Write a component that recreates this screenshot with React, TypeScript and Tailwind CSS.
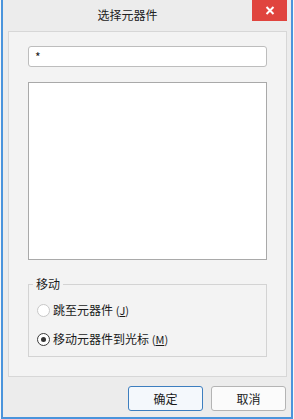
import React from 'react';

const font = { fontFamily: '"Noto Sans CJK SC", "Noto Sans", sans-serif' };

const Radio: React.FC<{ checked?: boolean; label: string; hot: string }> = ({ checked, label, hot }) => (
  <label className="flex items-center h-[20px] pl-[8px] text-[12px] text-[#1a1a1a]">
    <span
      className={`w-[13px] h-[13px] rounded-full bg-white flex items-center justify-center border ${
        checked ? 'border-[#3a3a3a]' : 'border-[#c8c8c8]'
      }`}
    >
      {checked && <span className="w-[5px] h-[5px] rounded-full bg-[#333]" />}
    </span>
    <span className="ml-[3px]">
      {label} <span className="text-[11px]">(<span className="underline">{hot}</span>)</span>
    </span>
  </label>
);

const App: React.FC = () => {
  return (
    <div className="w-[294px] h-[419px] px-[1px] bg-[#f7f7f7]" style={font}>
      <div className="h-full flex flex-col bg-[#ececec] border-x-2 border-b-2 border-[#4a94dc]">
        {/* title bar */}
        <div className="h-[31px] flex items-start">
          <div className="flex-1 h-[30px] flex items-center justify-center text-[12px] text-[#222]">选择元器件</div>
          <button className="w-[35px] h-[21px] mr-[4px] bg-[#e0443e] flex items-center justify-center">
            <svg width="10" height="9" viewBox="0 0 10 9">
              <path d="M1.5 1 L8.5 8 M8.5 1 L1.5 8" stroke="#fff" strokeWidth="2" />
            </svg>
          </button>
        </div>

        {/* content panel */}
        <div className="ml-[5px] mr-[4px] h-[346px] border border-[#d7d7d7] bg-[#f3f3f3] px-[19px] pt-[14px]">
          <div className="h-[21px] rounded-[3px] border border-[#bdbdbd] bg-white flex items-center pl-[6px] text-[12px] text-[#222]">
            *
          </div>
          <div className="mt-[15px] h-[178px] border border-[#a9a9a9] bg-white" />

          <fieldset className="mt-[16px] h-[81px] border border-[#d3d3d3]">
            <legend className="ml-[4px] px-[3px] text-[12px] leading-[16px] text-[#1a1a1a]">移动</legend>
            <div className="pt-[8px] flex flex-col gap-[9px]">
              <Radio label="跳至元器件" hot="J" />
              <Radio checked label="移动元器件到光标" hot="M" />
            </div>
          </fieldset>
        </div>

        {/* buttons */}
        <div className="flex justify-end gap-[8px] mt-[9px] mr-[5px]">
          <button className="w-[75px] h-[25px] rounded-[3px] border border-[#3d7ebf] bg-[#f4f8fc] text-[12px] text-[#1a1a1a]">
            确定
          </button>
          <button className="w-[75px] h-[25px] rounded-[3px] border border-[#b4b4b4] bg-[#fbfbfb] text-[12px] text-[#1a1a1a]">
            取消
          </button>
        </div>
      </div>
    </div>
  );
};

export default App;
